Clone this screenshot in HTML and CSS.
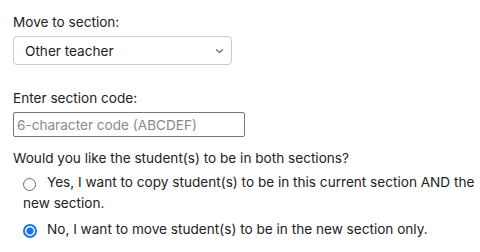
FILE: index.html
```html
<!DOCTYPE html>
<html>
<head>
<meta charset="utf-8">
<link rel="stylesheet" href="styles.css">
</head>
<body>
<div class="form">
  <div class="field">
    <label class="label">Move to section:</label>
    <div class="select">
      <span class="select-value">Other teacher</span>
      <svg class="chev" width="9" height="6" viewBox="0 0 9 6"><path d="M1 1.5 L4.5 4.5 L8 1.5" fill="none" stroke="#666" stroke-width="1.2"/></svg>
    </div>
  </div>
  <div class="field field-code">
    <label class="label">Enter section code:</label>
    <div class="input"><span class="placeholder">6-character code (ABCDEF)</span></div>
  </div>
  <div class="question">Would you like the student(s) to be in both sections?</div>
  <div class="options">
    <div class="option"><span class="radio"></span>Yes, I want to copy student(s) to be in this current section AND the new section.</div>
    <div class="option"><span class="radio checked"></span>No, I want to move student(s) to be in the new section only.</div>
  </div>
</div>
</body>
</html>
```
FILE: styles.css
```css
html, body {
  margin: 0;
  padding: 0;
  background: #fff;
}
body {
  font-family: Inter, "Noto Sans", sans-serif;
  font-size: 13.6px;
  color: #222;
}
.form {
  padding: 12px 4px 0 13px;
}
.label {
  display: block;
  line-height: 20px;
  margin-bottom: 4px;
}
.select {
  width: 219px;
  height: 29px;
  box-sizing: border-box;
  border: 1px solid #ccc;
  border-radius: 4px;
  display: flex;
  align-items: center;
  justify-content: space-between;
  padding: 0 7px 0 11px;
}
.field-code {
  margin-top: 23px;
}
.field-code .label {
  margin-bottom: 4px;
}
.input {
  width: 232px;
  height: 25px;
  box-sizing: border-box;
  border: 1px solid #767676;
  border-radius: 2px;
  display: flex;
  align-items: center;
  padding: 0 3px;
}
.placeholder {
  color: #8a8a8a;
}
.question {
  margin-top: 11px;
  line-height: 20px;
}
.options {
  padding-left: 10px;
  margin-top: 4px;
}
.option {
  line-height: 21px;
  margin-bottom: 5px;
}
.radio {
  display: inline-block;
  width: 13px;
  height: 13px;
  box-sizing: border-box;
  border: 1px solid #6b6b6b;
  border-radius: 50%;
  vertical-align: -4px;
  margin: 0 11px 0 0;
}
.radio.checked {
  width: 14px;
  height: 14px;
  border: 2px solid #1a73e8;
  background: radial-gradient(circle, #1a73e8 0 3.3px, #fff 3.9px);
  margin-right: 10px;
}
```
